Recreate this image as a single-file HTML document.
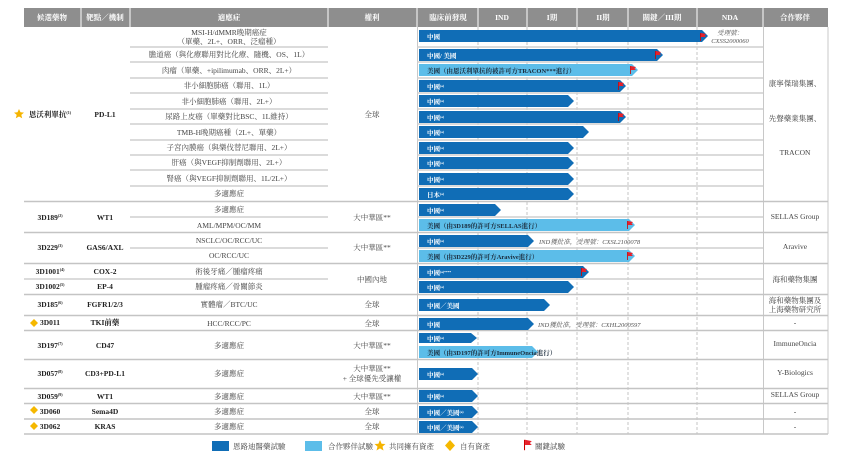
<!DOCTYPE html>
<html><head><meta charset="utf-8"><style>
html,body{margin:0;padding:0;background:#fff;width:843px;height:463px;overflow:hidden}
svg text{font-family:"Liberation Serif","Noto Serif CJK SC","Noto Sans CJK TC",serif;font-size:7.5px;fill:#444}
.h{fill:#fff;font-weight:bold}
.b{font-weight:bold;fill:#222}
.w{fill:#fff;font-weight:bold;font-size:6.5px}
.i{font-style:italic;fill:#555;font-size:6.5px}
</style></head><body>
<svg width="843" height="463" xmlns="http://www.w3.org/2000/svg">
<defs>
<g id="fl"><rect x="0" y="-4" width="0.8" height="8" fill="#c00"/><path d="M0.8,-4 L6,-3 L4.5,-1.5 L6,0 L0.8,0 Z" fill="#e8202a"/></g>
</defs>
<!-- header -->
<rect x="24" y="8" width="804" height="19" fill="#8e8e8e"/>
<g stroke="#fff" stroke-width="1">
<line x1="81" y1="8" x2="81" y2="27"/><line x1="130" y1="8" x2="130" y2="27"/><line x1="328" y1="8" x2="328" y2="27"/><line x1="417" y1="8" x2="417" y2="27"/><line x1="478" y1="8" x2="478" y2="27"/><line x1="527" y1="8" x2="527" y2="27"/><line x1="577" y1="8" x2="577" y2="27"/><line x1="628" y1="8" x2="628" y2="27"/><line x1="697" y1="8" x2="697" y2="27"/><line x1="763" y1="8" x2="763" y2="27"/>
</g>
<g text-anchor="middle">
<text class="h" x="52" y="20">候選藥物</text><text class="h" x="105" y="20">靶點／機制</text><text class="h" x="229" y="20">適應症</text><text class="h" x="372" y="20">權利</text><text class="h" x="448" y="20">臨床前發現</text><text class="h" x="502" y="20">IND</text><text class="h" x="552" y="20">I期</text><text class="h" x="603" y="20">II期</text><text class="h" x="662" y="20">關鍵／III期</text><text class="h" x="730" y="20">NDA</text><text class="h" x="795" y="20">合作夥伴</text>
</g>
<!-- grid vertical -->
<g stroke="#c8c8c8" stroke-width="1">
<line x1="417.5" y1="27" x2="417.5" y2="434"/><line x1="763.5" y1="27" x2="763.5" y2="434"/><line x1="828" y1="27" x2="828" y2="434"/>
</g>
<g stroke="#b8b8b8" stroke-width="0.8" stroke-dasharray="3,2">
<line x1="478" y1="27" x2="478" y2="434"/><line x1="527" y1="27" x2="527" y2="434"/><line x1="577" y1="27" x2="577" y2="434"/><line x1="628" y1="27" x2="628" y2="434"/><line x1="697" y1="27" x2="697" y2="434"/>
</g>
<!-- row lines (indication + bars) -->
<g stroke="#cfcfcf" stroke-width="1.5">
<line x1="130" y1="47" x2="328" y2="47"/><line x1="417" y1="47" x2="763" y2="47"/>
<line x1="130" y1="62" x2="328" y2="62"/><line x1="417" y1="62" x2="763" y2="62"/>
<line x1="130" y1="78" x2="328" y2="78"/><line x1="417" y1="78" x2="763" y2="78"/>
<line x1="130" y1="93" x2="328" y2="93"/><line x1="417" y1="93" x2="763" y2="93"/>
<line x1="130" y1="109" x2="328" y2="109"/><line x1="417" y1="109" x2="763" y2="109"/>
<line x1="130" y1="124" x2="328" y2="124"/><line x1="417" y1="124" x2="763" y2="124"/>
<line x1="130" y1="140" x2="328" y2="140"/><line x1="417" y1="140" x2="763" y2="140"/>
<line x1="130" y1="155" x2="328" y2="155"/><line x1="417" y1="155" x2="763" y2="155"/>
<line x1="130" y1="170" x2="328" y2="170"/><line x1="417" y1="170" x2="763" y2="170"/>
<line x1="130" y1="186" x2="328" y2="186"/><line x1="417" y1="186" x2="763" y2="186"/>
<line x1="130" y1="217" x2="328" y2="217"/><line x1="417" y1="217" x2="763" y2="217"/>
<line x1="130" y1="248" x2="328" y2="248"/><line x1="417" y1="248" x2="763" y2="248"/>
<line x1="24" y1="279" x2="328" y2="279"/><line x1="417" y1="279" x2="763" y2="279"/>
</g>
<!-- group lines -->
<g stroke="#c4c4c4" stroke-width="1.5">
<line x1="24" y1="201.5" x2="828" y2="201.5"/><line x1="24" y1="232.5" x2="828" y2="232.5"/><line x1="24" y1="263.5" x2="828" y2="263.5"/><line x1="24" y1="294.5" x2="828" y2="294.5"/><line x1="24" y1="315.5" x2="828" y2="315.5"/><line x1="24" y1="330.5" x2="828" y2="330.5"/><line x1="24" y1="359.5" x2="828" y2="359.5"/><line x1="24" y1="388.5" x2="828" y2="388.5"/><line x1="24" y1="403.5" x2="828" y2="403.5"/><line x1="24" y1="419" x2="828" y2="419"/><line x1="24" y1="434" x2="828" y2="434"/>
</g>
<!-- left columns -->
<g text-anchor="middle">
<text x="229" y="35">MSI-H/dMMR晚期癌症</text><text x="229" y="44">（單藥、2L+、ORR、泛瘤種）</text>
<text x="229" y="57">膽道癌（與化療聯用對比化療、隨機、OS、1L）</text>
<text x="229" y="73">肉瘤（單藥、+ipilimumab、ORR、2L+）</text>
<text x="229" y="88">非小細胞肺癌（聯用、1L）</text>
<text x="229" y="104">非小細胞肺癌（聯用、2L+）</text>
<text x="229" y="119">尿路上皮癌（單藥對比BSC、1L維持）</text>
<text x="229" y="135">TMB-H晚期癌種（2L+、單藥）</text>
<text x="229" y="150">子宮內膜癌（與樂伐替尼聯用、2L+）</text>
<text x="229" y="165">肝癌（與VEGF抑制劑聯用、2L+）</text>
<text x="229" y="181">腎癌（與VEGF抑制劑聯用、1L/2L+）</text>
<text x="229" y="196">多適應症</text>
<text x="229" y="212">多適應症</text><text x="229" y="228">AML/MPM/OC/MM</text>
<text x="229" y="243">NSCLC/OC/RCC/UC</text><text x="229" y="258">OC/RCC/UC</text>
<text x="229" y="274">術後牙痛／腫瘤疼痛</text><text x="229" y="289">腫瘤疼痛／骨關節炎</text>
<text x="229" y="307">實體瘤／BTC/UC</text>
<text x="229" y="326">HCC/RCC/PC</text>
<text x="229" y="348">多適應症</text>
<text x="229" y="376">多適應症</text>
<text x="229" y="399">多適應症</text>
<text x="229" y="414">多適應症</text>
<text x="229" y="429">多適應症</text>
<text x="372" y="117">全球</text>
<text x="372" y="220">大中華區**</text><text x="372" y="250">大中華區**</text><text x="372" y="282">中國內地</text><text x="372" y="307">全球</text><text x="372" y="326">全球</text><text x="372" y="348">大中華區**</text>
<text x="372" y="371">大中華區**</text><text x="372" y="381">+ 全球優先受讓權</text>
<text x="372" y="399">大中華區**</text><text x="372" y="414">全球</text><text x="372" y="429">全球</text>
<text class="b" x="105" y="117">PD-L1</text>
<text class="b" x="105" y="220">WT1</text><text class="b" x="105" y="250">GAS6/AXL</text><text class="b" x="105" y="274">COX-2</text><text class="b" x="105" y="289">EP-4</text><text class="b" x="105" y="307">FGFR1/2/3</text><text class="b" x="105" y="325">TKI前藥</text><text class="b" x="105" y="348">CD47</text><text class="b" x="105" y="376">CD3+PD-L1</text><text class="b" x="105" y="399">WT1</text><text class="b" x="105" y="414">Sema4D</text><text class="b" x="105" y="429">KRAS</text>
<text class="b" x="50" y="117">恩沃利單抗<tspan font-size="4" dy="-3">(1)</tspan></text>
<text class="b" x="50" y="220">3D189<tspan font-size="4" dy="-3">(2)</tspan></text>
<text class="b" x="50" y="250">3D229<tspan font-size="4" dy="-3">(3)</tspan></text>
<text class="b" x="50" y="274">3D1001<tspan font-size="4" dy="-3">(4)</tspan></text>
<text class="b" x="50" y="289">3D1002<tspan font-size="4" dy="-3">(5)</tspan></text>
<text class="b" x="50" y="307">3D185<tspan font-size="4" dy="-3">(6)</tspan></text>
<text class="b" x="50" y="325">3D011</text>
<text class="b" x="50" y="348">3D197<tspan font-size="4" dy="-3">(7)</tspan></text>
<text class="b" x="50" y="376">3D057<tspan font-size="4" dy="-3">(8)</tspan></text>
<text class="b" x="50" y="399">3D059<tspan font-size="4" dy="-3">(9)</tspan></text>
<text class="b" x="50" y="414">3D060</text>
<text class="b" x="50" y="429">3D062</text>
<text x="795" y="86">康寧傑瑞集團、</text><text x="795" y="121">先聲藥業集團、</text><text x="795" y="155">TRACON</text>
<text x="795" y="219">SELLAS Group</text><text x="795" y="249">Aravive</text><text x="795" y="282">海和藥物集團</text>
<text x="795" y="303">海和藥物集團及</text><text x="795" y="312">上海藥物研究所</text>
<text x="795" y="325">-</text><text x="795" y="346">ImmuneOncia</text><text x="795" y="375">Y-Biologics</text><text x="795" y="397">SELLAS Group</text><text x="795" y="414">-</text><text x="795" y="429">-</text>
</g>
<!-- icons left -->
<path d="M19,109 L20.5,112.3 L24,112.6 L21.3,114.9 L22.2,118.3 L19,116.5 L15.8,118.3 L16.7,114.9 L14,112.6 L17.5,112.3 Z" fill="#f5b400"/>
<g fill="#f5b800"><path d="M34,319 L38,323 L34,327 L30,323 Z"/><path d="M34,406 L38,410 L34,414 L30,410 Z"/><path d="M34,422 L38,426 L34,430 L30,426 Z"/></g>
<!-- bars -->
<g fill="#106db6">
<path d="M419,30 H702 L708,36 L702,42 H419 Z"/>
<path d="M419,49 H657 L663,55 L657,61 H419 Z"/>
<path d="M419,80 H620 L626,86 L620,92 H419 Z"/>
<path d="M419,95 H568 L574,101 L568,107 H419 Z"/>
<path d="M419,111 H620 L626,117 L620,123 H419 Z"/>
<path d="M419,126 H583 L589,132 L583,138 H419 Z"/>
<path d="M419,142 H568 L574,148 L568,154 H419 Z"/>
<path d="M419,157 H568 L574,163 L568,169 H419 Z"/>
<path d="M419,173 H568 L574,179 L568,185 H419 Z"/>
<path d="M419,188 H568 L574,194 L568,200 H419 Z"/>
<path d="M419,204 H495 L501,210 L495,216 H419 Z"/>
<path d="M419,235 H528 L534,241 L528,247 H419 Z"/>
<path d="M419,266 H583 L589,272 L583,278 H419 Z"/>
<path d="M419,281 H568 L574,287 L568,293 H419 Z"/>
<path d="M419,299 H544 L550,305 L544,311 H419 Z"/>
<path d="M419,318 H528 L534,324 L528,330 H419 Z"/>
<path d="M419,333 H471 L477,338 L471,343 H419 Z"/>
<path d="M419,368 H472 L478,374 L472,380 H419 Z"/>
<path d="M419,390 H472 L478,396 L472,402 H419 Z"/>
<path d="M419,406 H472 L478,412 L472,418 H419 Z"/>
<path d="M419,421 H472 L478,427 L472,433 H419 Z"/>
</g>
<g fill="#5cbde9">
<path d="M419,64 H632 L638,70 L632,76 H419 Z"/>
<path d="M419,219 H629 L635,225 L629,231 H419 Z"/>
<path d="M419,250 H629 L635,256 L629,262 H419 Z"/>
<path d="M419,346 H532 L538,352 L532,358 H419 Z"/>
</g>
<!-- bar labels -->
<g>
<text class="w" x="427" y="39">中國</text><text class="w" x="427" y="58">中國/ 美國</text>
<text class="w" x="427" y="73" style="fill:#1a2a3a">美國（由恩沃利單抗的被許可方TRACON***進行）</text>
<text class="w" x="427" y="89">中國<tspan font-size="3.5" dy="-2">(a)</tspan></text>
<text class="w" x="427" y="104">中國<tspan font-size="3.5" dy="-2">(a)</tspan></text>
<text class="w" x="427" y="120">中國<tspan font-size="3.5" dy="-2">(a)</tspan></text>
<text class="w" x="427" y="135">中國<tspan font-size="3.5" dy="-2">(a)</tspan></text>
<text class="w" x="427" y="151">中國<tspan font-size="3.5" dy="-2">(a)</tspan></text>
<text class="w" x="427" y="166">中國<tspan font-size="3.5" dy="-2">(a)</tspan></text>
<text class="w" x="427" y="182">中國<tspan font-size="3.5" dy="-2">(a)</tspan></text>
<text class="w" x="427" y="197">日本<tspan font-size="3.5" dy="-2">(a)</tspan></text>
<text class="w" x="427" y="213">中國<tspan font-size="3.5" dy="-2">(a)</tspan></text>
<text class="w" x="427" y="228" style="fill:#1a2a3a">美國（由3D189的許可方SELLAS進行）</text>
<text class="w" x="427" y="244">中國<tspan font-size="3.5" dy="-2">(a)</tspan></text>
<text class="w" x="427" y="259" style="fill:#1a2a3a">美國（由3D229的許可方Aravive進行）</text>
<text class="w" x="427" y="275">中國<tspan font-size="3.5" dy="-2">(a)****</tspan></text>
<text class="w" x="427" y="290">中國<tspan font-size="3.5" dy="-2">(a)</tspan></text>
<text class="w" x="427" y="308">中國／美國</text>
<text class="w" x="427" y="327">中國</text>
<text class="w" x="427" y="341">中國<tspan font-size="3.5" dy="-2">(a)</tspan></text>
<text class="w" x="427" y="355" style="fill:#1a2a3a">美國（由3D197的許可方ImmuneOncia進行）</text>
<text class="w" x="427" y="377">中國<tspan font-size="3.5" dy="-2">(a)</tspan></text>
<text class="w" x="427" y="399">中國<tspan font-size="3.5" dy="-2">(a)</tspan></text>
<text class="w" x="427" y="415">中國／美國<tspan font-size="3.5" dy="-2">(a)</tspan></text>
<text class="w" x="427" y="430">中國／美國<tspan font-size="3.5" dy="-2">(a)</tspan></text>
<text class="i" x="730" y="35" text-anchor="middle">受理號：</text>
<text class="i" x="730" y="43" text-anchor="middle">CXSS2000060</text>
<text class="i" x="539" y="244">IND獲批准，受理號：CXSL2100078</text>
<text class="i" x="538" y="327">IND獲批准，受理號：CXHL2000597</text>
</g>
<!-- flags -->
<use href="#fl" x="700" y="37"/><use href="#fl" x="655" y="55"/><use href="#fl" x="630" y="70"/><use href="#fl" x="618" y="86"/><use href="#fl" x="618" y="117"/><use href="#fl" x="627" y="225"/><use href="#fl" x="627" y="256"/><use href="#fl" x="581" y="272"/>
<!-- legend -->
<rect x="212" y="441" width="17" height="10" fill="#106db6"/><text x="233" y="449">恩路迪醫藥試驗</text>
<rect x="305" y="441" width="17" height="10" fill="#5cbde9"/><text x="328" y="449">合作夥伴試驗</text>
<path d="M380,440 L381.6,443.7 L385.5,444 L382.5,446.6 L383.5,450.5 L380,448.4 L376.5,450.5 L377.5,446.6 L374.5,444 L378.4,443.7 Z" fill="#f5b400"/><text x="389" y="449">共同擁有資產</text>
<path d="M450,440 L455,445.5 L450,451 L445,445.5 Z" fill="#f5b800"/><text x="460" y="449">自有資產</text>
<g transform="translate(524,445) scale(1.3)"><use href="#fl"/></g><text x="535" y="449">關鍵試驗</text>
</svg>
</body></html>
